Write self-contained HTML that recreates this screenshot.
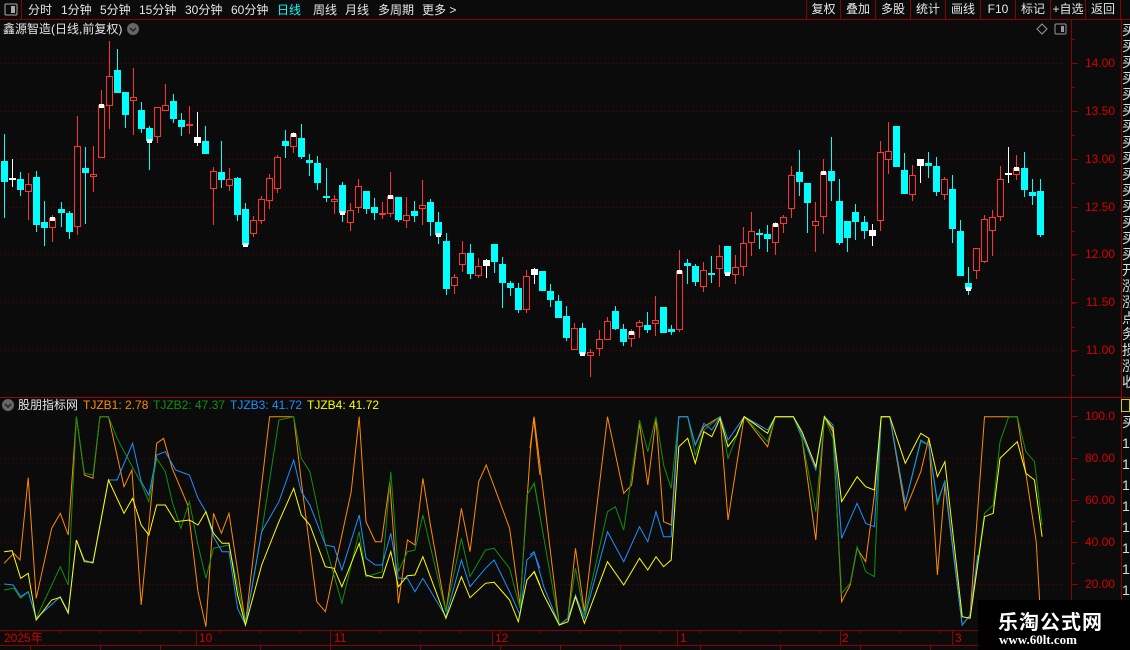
<!DOCTYPE html>
<html><head><meta charset="utf-8">
<style>
html,body{margin:0;padding:0;background:#0b0b0b;width:1130px;height:650px;overflow:hidden;font-family:"Liberation Sans","Noto Sans CJK SC",sans-serif;}
#wrap{position:relative;width:1130px;height:650px;}
.t{position:absolute;color:#e6e6e6;font-size:12px;line-height:14px;white-space:nowrap}
.btn{position:absolute;top:0;height:19px;line-height:19px;color:#e6e6e6;font-size:12px;text-align:center;border-left:1px solid #8b0000}
.ax{position:absolute;color:#d40000;font-size:12px;right:15px;line-height:12px}
</style></head><body><div id="wrap">
<svg id="s" width="1130" height="650" style="position:absolute;left:0;top:0" xmlns="http://www.w3.org/2000/svg"></svg>

<div class="t" style="left:28px;top:3px">分时</div>
<div class="t" style="left:61px;top:3px">1分钟</div>
<div class="t" style="left:100px;top:3px">5分钟</div>
<div class="t" style="left:139px;top:3px">15分钟</div>
<div class="t" style="left:185px;top:3px">30分钟</div>
<div class="t" style="left:231px;top:3px">60分钟</div>
<div class="t" style="left:277px;top:3px;color:#00ffff">日线</div>
<div class="t" style="left:313px;top:3px">周线</div>
<div class="t" style="left:345px;top:3px">月线</div>
<div class="t" style="left:378px;top:3px">多周期</div>
<div class="t" style="left:422px;top:3px">更多 &gt;</div>

<div class="btn" style="left:806px;width:33px">复权</div>
<div class="btn" style="left:840px;width:34px">叠加</div>
<div class="btn" style="left:875px;width:34px">多股</div>
<div class="btn" style="left:910px;width:34px">统计</div>
<div class="btn" style="left:945px;width:34px">画线</div>
<div class="btn" style="left:980px;width:34px">F10</div>
<div class="btn" style="left:1015px;width:34px">标记</div>
<div class="btn" style="left:1050px;width:34px">+自选</div>
<div class="btn" style="left:1085px;width:34px;border-right:1px solid #8b0000">返回</div>

<div class="t" style="left:3px;top:22px">鑫源智造(日线,前复权)</div>
<div class="t" style="left:18px;top:398px">股朋指标网</div>
<div class="t" style="left:83px;top:398px;color:#ff8c00">TJZB1: 2.78</div>
<div class="t" style="left:153px;top:398px;color:#109010">TJZB2: 47.37</div>
<div class="t" style="left:230px;top:398px;color:#1e90ff">TJZB3: 41.72</div>
<div class="t" style="left:307px;top:398px;color:#ffff00">TJZB4: 41.72</div>

<div class="ax" style="top:57px">14.00</div>
<div class="ax" style="top:105px">13.50</div>
<div class="ax" style="top:153px">13.00</div>
<div class="ax" style="top:201px">12.50</div>
<div class="ax" style="top:248px">12.00</div>
<div class="ax" style="top:296px">11.50</div>
<div class="ax" style="top:344px">11.00</div>
<div class="ax" style="top:410px">100.0</div>
<div class="ax" style="top:452px">80.00</div>
<div class="ax" style="top:494px">60.00</div>
<div class="ax" style="top:536px">40.00</div>
<div class="ax" style="top:578px">20.00</div>

<div class="t" style="left:4px;top:631px;color:#d40000">2025年</div>
<div class="t" style="left:199px;top:631px;color:#d40000">10</div>
<div class="t" style="left:334px;top:631px;color:#d40000">11</div>
<div class="t" style="left:495px;top:631px;color:#d40000">12</div>
<div class="t" style="left:680px;top:631px;color:#d40000">1</div>
<div class="t" style="left:842px;top:631px;color:#d40000">2</div>
<div class="t" style="left:955px;top:631px;color:#d40000">3</div>

<div style="position:absolute;left:1122px;top:22px;width:8px;height:370px;overflow:hidden;color:#ddd;font-size:14px;line-height:16px;word-break:break-all">买买买买买买买买买买买买买买买开涨涨点务损涨收</div>
<div style="position:absolute;left:1122px;top:412px;width:8px;height:200px;overflow:hidden;color:#ddd;font-size:14px;line-height:21px;word-break:break-all">买1111111111</div>
<div style="position:absolute;left:1121px;top:399px;width:9px;height:13px;border:1px solid #cc0;box-sizing:border-box"></div>

<div style="position:absolute;left:978px;top:600px;width:152px;height:50px;background:#000">
<div style="position:absolute;left:20px;top:6px;color:#fff;font-size:20px;font-weight:bold;letter-spacing:1px;font-family:'Liberation Sans','Noto Sans CJK SC',sans-serif">乐淘公式网</div>
<div style="position:absolute;left:21px;top:32px;color:#fff;font-size:13px;font-weight:bold;font-family:'Liberation Serif',serif">www.60lt.com</div>
</div>
</div>
<script>
var S=document.getElementById('s');var h='';
function L(x1,y1,x2,y2,c,w,d){h+='<line x1="'+x1+'" y1="'+y1+'" x2="'+x2+'" y2="'+y2+'" stroke="'+c+'" stroke-width="'+(w||1)+'"'+(d?' stroke-dasharray="'+d+'"':'')+'/>';}
var R='#8b0000';
L(0,19.5,1130,19.5,R);L(21.5,0,21.5,19,R);
h+='<rect x="5" y="4" width="12" height="11" fill="none" stroke="#aaa" rx="1"/><rect x="11" y="6" width="4" height="7" fill="#aaa"/>';
h+='<circle cx="133" cy="29" r="6" fill="#666"/><path d="M130 28l3 3 3-3" stroke="#222" fill="none" stroke-width="1.5"/>';
h+='<circle cx="8" cy="405" r="6" fill="#666"/><path d="M5 404l3 3 3-3" stroke="#222" fill="none" stroke-width="1.5"/>';
h+='<path d="M1042 24l5 5-5 5-5-5z" fill="none" stroke="#999"/><rect x="1055" y="24" width="11" height="10" fill="none" stroke="#999" rx="1"/><rect x="1061" y="26" width="3" height="6" fill="#999"/>';
[63,111,159,207,254,302,350].forEach(function(y){L(0,y+.5,1062,y+.5,'#6a0000',1,'1 3');L(1071,y+.5,1078,y+.5,R);});
for(var y=39;y<395;y+=24)L(1071,y+.5,1075,y+.5,R);
[458,500,542,584].forEach(function(y){L(0,y+.5,1062,y+.5,'#6a0000',1,'1 3');});
[416,458,500,542,584].forEach(function(y){L(1071,y+.5,1078,y+.5,R);});
for(var y=437;y<630;y+=42)L(1071,y+.5,1075,y+.5,R);
L(1071.5,20,1071.5,645,R);L(1121.5,20,1121.5,650,R);
L(0,397.5,1130,397.5,'#a00000');L(0,630.5,1130,630.5,R);L(0,645.5,1130,645.5,R);
[196,330,492,677,840,952].forEach(function(x){L(x+.5,630,x+.5,645,R);});
for(var x=20;x<1070;x+=40)L(x+.5,630,x+.5,633,R);
[30,100,160,260,330,420,500,560,620,700,780,860,930,1000,1070].forEach(function(x){L(x+.5,645,x+.5,650,R);});
var D=[['c',161,182,134,218],['w',179,179,159,187],['c',179,190,172,196],['r',184,192,173,220],['c',177,225,171,232],['c',222,228,201,246],['r',218,228,215,242,'t'],['c',209,213,202,227],['c',213,232,211,239],['r',146,227,116,235],
['c',168,173,147,224],['r',174,177,146,192],['r',105,158,90,158,'t'],['r',76,106,41,129],['c',70,93,49,93],['c',92,115,92,128],['r',97,101,68,135],['c',110,129,102,133],['c',128,141,126,170,'b'],['r',107,137,107,143],
['r',105,111,84,111],['c',101,119,94,123],['c',120,127,113,136],['r',124,126,106,134],['w',138,142,112,146],['c',141,154,126,154],['r',171,189,167,225],['c',172,180,141,188],['r',179,186,168,191],['c',178,215,177,221],
['c',209,245,203,247,'b'],['r',220,234,216,237],['r',199,221,196,224],['r',178,201,174,209],['r',157,189,155,193],['c',141,146,130,158],['r',134,147,132,153,'t'],['c',138,157,124,159],['c',160,163,154,176],['c',163,183,156,190],
['c',196,198,168,202],['r',199,202,195,214],['c',185,213,182,222,'b'],['r',210,223,203,231],['r',186,208,179,213],['c',191,209,191,214],['c',207,213,198,220],['r',213,215,202,219],['r',196,214,172,217,'t'],['c',197,220,197,222],
['r',215,221,197,228],['c',211,216,201,222],['r',205,209,180,225],['c',202,222,199,236],['c',222,235,212,244,'b'],['c',241,289,233,295],['r',277,286,274,294],['r',253,265,241,272],['c',253,274,244,279],['r',266,276,258,278],
['w',261,265,259,278],['c',244,262,244,273],['c',264,283,257,308],['c',283,288,281,296],['c',288,310,283,313],['r',276,310,270,313],['w',270,274,268,284],['c',271,291,271,291],['c',291,300,284,307],['c',301,318,295,318],
['c',316,338,306,341],['r',328,350,323,350],['c',328,354,323,356,'b'],['r',352,356,349,377],['r',339,349,330,356],['r',321,340,317,340],['c',311,329,306,330],['c',329,342,324,346],['r',332,339,329,347,'t'],['r',322,327,320,338],
['c',325,330,312,333],['r',320,324,296,336],['c',307,333,307,333],['c',329,332,325,335],['r',271,330,250,332,'t'],['c',263,266,259,284],['c',266,282,264,286],['r',270,287,262,292],['c',273,274,256,283],['r',256,269,245,287],
['c',246,274,246,276,'b'],['r',267,275,255,284],['r',243,267,227,276],['r',231,243,212,256],['c',233,234,229,249],['c',234,239,225,252],['r',224,243,222,255,'t'],['r',217,224,215,233],['r',175,209,166,218],['c',172,182,150,196],
['c',183,203,183,233],['r',221,226,202,252],['r',172,217,159,234,'t'],['c',171,181,137,201],['c',201,243,179,245],['c',221,238,221,252],['c',212,222,204,240],['c',222,231,216,239],['w',231,235,224,246],['r',152,221,141,231],
['r',151,160,122,174],['c',126,167,126,167],['c',170,194,153,194],['r',175,195,165,201],['w',160,165,160,183],['c',163,166,152,178],['c',166,192,157,196],['r',179,195,177,200],['c',189,229,175,243],['c',231,276,220,276],
['c',283,289,267,295,'b'],['r',248,271,248,279],['r',219,262,215,263],['r',217,231,210,256],['r',179,217,166,221],['w',174,174,147,183],['r',168,175,155,180,'t'],['c',168,190,152,197],['c',192,196,179,205],['c',191,235,179,237]];
D.forEach(function(d,i){var x=Math.round(4.3+8.03*i)+.5;var t=d[0];
var col=t=='c'?'#00ffff':(t=='r'?'#ff3232':'#ffffff');
L(x,d[3],x,d[4],col);
if(t=='c')h+='<rect x="'+(x-3.5)+'" y="'+d[1]+'" width="7" height="'+Math.max(2,d[2]-d[1])+'" fill="#00ffff"/>';
else if(t=='r')h+='<rect x="'+(x-3)+'" y="'+(d[1]+.5)+'" width="6" height="'+Math.max(1,d[2]-d[1]-1)+'" fill="#0b0b0b" stroke="#ff3232"/>';
else h+='<rect x="'+(x-3.5)+'" y="'+(d[1]-1)+'" width="7" height="'+Math.max(2,d[2]-d[1]+2)+'" fill="#fff"/>';
if(d[5]=='t')h+='<rect x="'+(x-2.5)+'" y="'+(d[1]-1)+'" width="5" height="4" fill="#fff"/>';
if(d[5]=='b')h+='<rect x="'+(x-2.5)+'" y="'+(d[2]-2)+'" width="5" height="4" fill="#fff"/>';
});
function P(a,off,c){var p=[];for(var k=0;k<a.length;k+=2)p.push((a[k]/2.904+off).toFixed(1)+','+(a[k+1]/3+405).toFixed(1));h+='<polyline points="'+p.join(' ')+'" fill="none" stroke="'+c+'" stroke-width="1"/>';}
var O1=[12,475,40,445,58,465,82,218,105,580,150,370,175,325,198,390,222,35,245,210,270,220,290,35,315,35,360,245,383,195,410,600,455,115,475,100,500,190,545,300,575,560,598,665,620,325,643,385,665,325,713,655,783,35,853,35,875,230,920,590,945,620,1020,260,1043,35,1063,350,1090,410,1108,410,1132,230,1157,595,1183,405,1205,420,1228,220,1250,360,1295,620,1340,310,1365,440,1390,230,1412,180,1480,370,1510,600,1540,140,1550,40,1568,210];
var O2=[0,130,12,35,85,660,110,640,132,430,158,620,225,35,272,265,295,240,318,55,342,240,366,40,388,350,410,360,432,35,458,35,480,120,505,65,552,35,575,345,622,35,690,125,712,35,765,35,790,100,830,405,855,35,880,80,905,590,930,540,950,430,975,470,1000,270,1020,35,1045,35,1090,315,1135,200,1158,100,1183,510,1205,240,1255,660,1278,630,1320,35,1415,35,1470,410,1480,585,1490,700];
var G1=[12,555,40,550,60,580,82,560,105,640,175,485,198,540,222,35,245,205,270,210,290,35,315,35,340,100,410,235,432,290,455,160,480,200,500,290,525,370,550,290,575,420,598,520,620,430,665,420,713,655,760,380,810,45,853,35,875,160,900,200,945,420,993,595,1043,380,1063,515,1110,500,1135,200,1157,500,1183,440,1205,435,1228,330,1295,620,1340,400,1365,515,1410,435,1435,430,1480,490,1510,610,1530,270,1552,235,1568,330];
var G2=[0,255,12,235,85,660,110,640,132,490,158,630,225,320,248,305,272,375,318,45,342,140,366,35,388,180,410,250,432,35,458,35,480,150,505,75,552,35,575,160,622,35,690,110,712,35,765,35,790,100,830,320,855,35,880,100,905,565,930,535,950,425,975,500,1000,515,1020,35,1045,35,1090,295,1135,110,1158,120,1183,300,1205,225,1255,660,1278,630,1320,325,1345,300,1365,110,1390,35,1415,35,1440,140,1465,170,1487,360];
var B1=[12,537,38,540,60,575,82,560,105,640,175,575,198,620,222,405,245,465,270,475,315,225,340,225,385,115,410,230,432,270,455,150,480,140,510,195,550,210,575,280,598,320,620,395,645,440,665,440,690,610,713,660,760,380,810,290,853,165,875,260,900,300,945,420,970,425,993,495,1043,330,1063,460,1090,480,1110,480,1135,385,1157,520,1183,520,1205,560,1228,520,1295,635,1340,465,1365,545,1410,490,1435,465,1480,560,1510,630,1530,465,1552,445,1568,490];
var B2=[0,450,12,440,40,545,85,660,110,640,132,570,158,640,225,380,272,470,318,365,342,410,366,320,388,395,410,395,432,35,458,35,480,120,505,55,528,75,552,35,575,105,622,35,690,75,712,35,765,35,790,90,830,195,855,35,880,60,905,400,950,295,975,355,1000,365,1020,35,1045,35,1090,295,1135,105,1158,120,1183,290,1205,230,1255,660,1278,630,1300,450];
var Y1=[12,440,35,437,60,520,82,505,105,645,150,585,175,577,198,625,222,405,245,470,270,472,315,225,360,325,385,280,410,360,432,390,455,300,480,300,510,350,550,345,575,360,598,320,620,385,645,415,665,415,690,570,713,660,760,480,810,350,853,250,875,330,900,360,945,485,970,490,993,545,1043,415,1063,510,1090,518,1110,518,1135,440,1157,545,1183,512,1205,510,1228,455,1295,640,1340,515,1365,578,1410,535,1435,532,1480,585,1505,650,1530,525,1552,500,1568,540];
var Y2=[0,515,12,500,40,570,85,660,110,650,132,575,158,655,225,470,272,540,318,460,342,495,366,455,388,485,410,465,432,125,458,100,480,175,505,80,528,95,552,40,575,125,600,90,622,35,690,85,712,35,765,35,790,80,830,185,855,35,880,70,905,290,950,215,975,245,1000,255,1020,35,1045,35,1090,175,1135,85,1158,100,1183,215,1205,170,1255,635,1278,640,1320,335,1345,325,1365,160,1415,110,1440,205,1465,225,1487,395];
P(O1,0,'#ff8c00');P(O2,530,'#ff8c00');P(G1,0,'#109010');P(G2,530,'#109010');P(B1,0,'#1e90ff');P(B2,530,'#1e90ff');P(Y1,0,'#ffff00');P(Y2,530,'#ffff00');
S.innerHTML=h;
</script>
</body></html>
